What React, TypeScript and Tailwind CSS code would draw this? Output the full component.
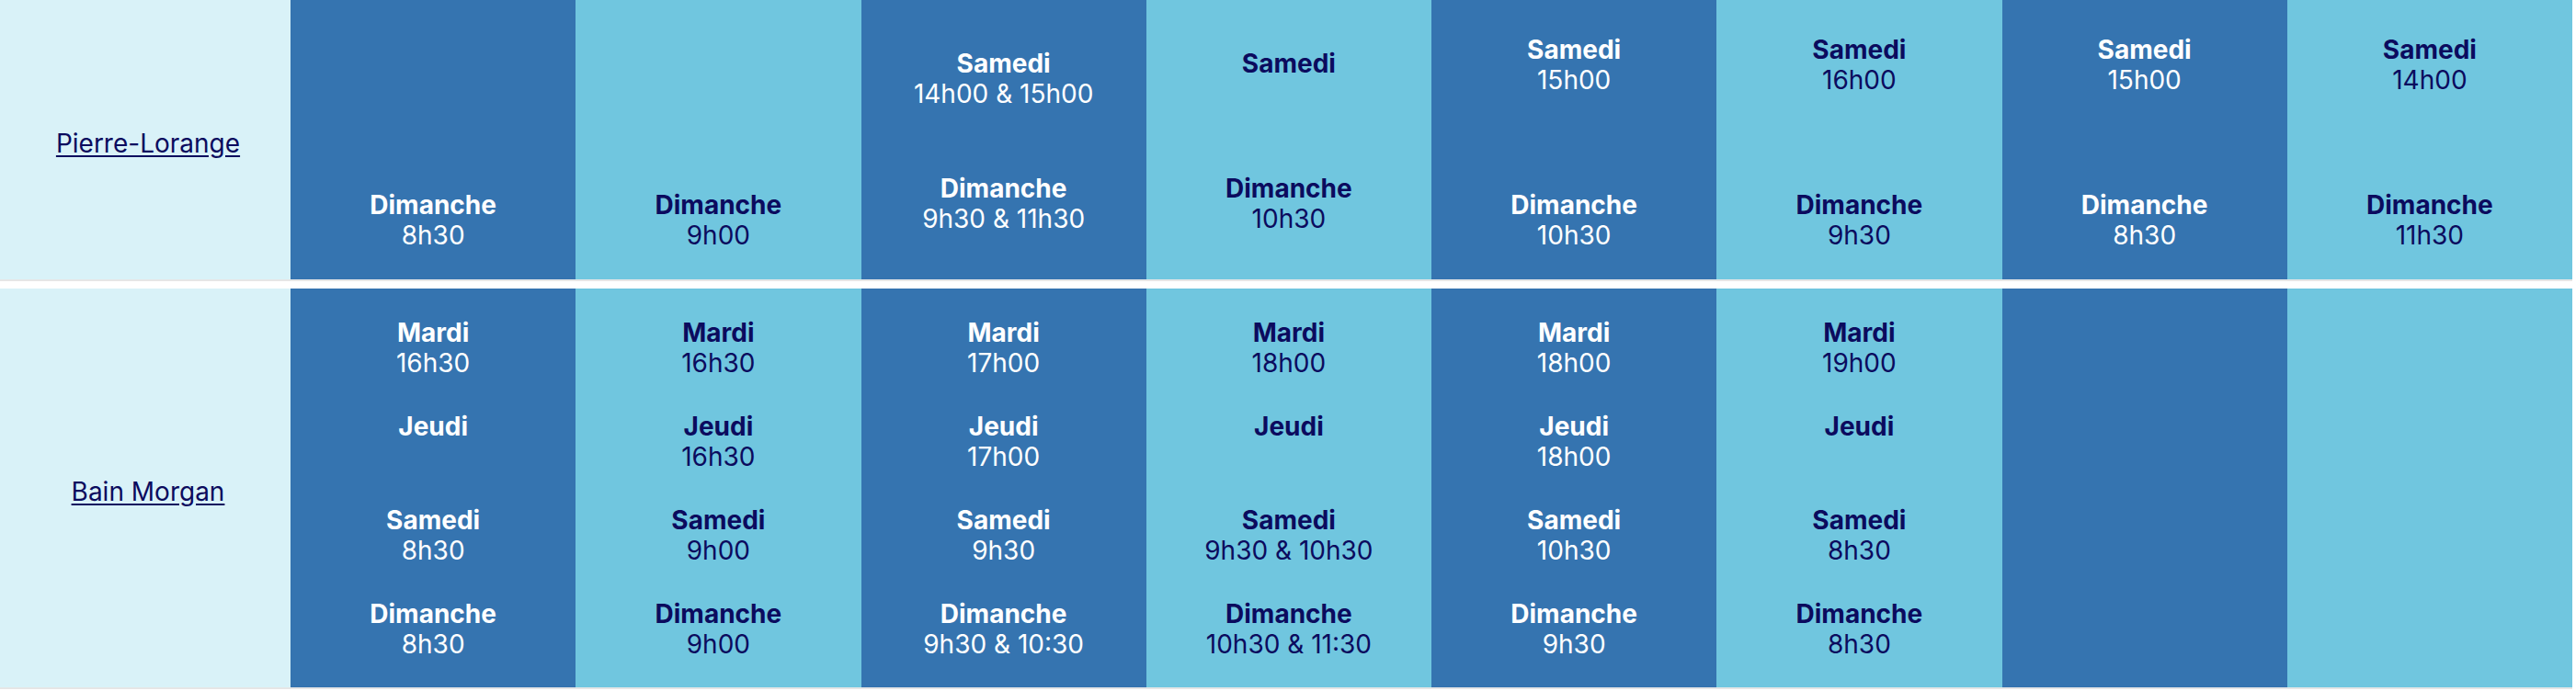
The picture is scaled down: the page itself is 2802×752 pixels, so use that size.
type Slot = { day: string; time?: string } | null;

type Cell = {
  dark: boolean;
  slots: Slot[];
  tight?: boolean;
};

const DARK = "bg-[#3574b0] text-white";
const LIGHT = "bg-[#70c6df] text-[#0b0b5e]";

const weekend: Cell[] = [
  { dark: true, slots: [null, { day: "Dimanche", time: "8h30" }] },
  { dark: false, slots: [null, { day: "Dimanche", time: "9h00" }] },
  {
    dark: true,
    tight: true,
    slots: [
      { day: "Samedi", time: "14h00 & 15h00" },
      { day: "Dimanche", time: "9h30 & 11h30" },
    ],
  },
  {
    dark: false,
    tight: true,
    slots: [{ day: "Samedi" }, { day: "Dimanche", time: "10h30" }],
  },
  {
    dark: true,
    slots: [
      { day: "Samedi", time: "15h00" },
      { day: "Dimanche", time: "10h30" },
    ],
  },
  {
    dark: false,
    slots: [
      { day: "Samedi", time: "16h00" },
      { day: "Dimanche", time: "9h30" },
    ],
  },
  {
    dark: true,
    slots: [
      { day: "Samedi", time: "15h00" },
      { day: "Dimanche", time: "8h30" },
    ],
  },
  {
    dark: false,
    slots: [
      { day: "Samedi", time: "14h00" },
      { day: "Dimanche", time: "11h30" },
    ],
  },
];

const week: Cell[] = [
  {
    dark: true,
    slots: [
      { day: "Mardi", time: "16h30" },
      { day: "Jeudi" },
      { day: "Samedi", time: "8h30" },
      { day: "Dimanche", time: "8h30" },
    ],
  },
  {
    dark: false,
    slots: [
      { day: "Mardi", time: "16h30" },
      { day: "Jeudi", time: "16h30" },
      { day: "Samedi", time: "9h00" },
      { day: "Dimanche", time: "9h00" },
    ],
  },
  {
    dark: true,
    slots: [
      { day: "Mardi", time: "17h00" },
      { day: "Jeudi", time: "17h00" },
      { day: "Samedi", time: "9h30" },
      { day: "Dimanche", time: "9h30 & 10:30" },
    ],
  },
  {
    dark: false,
    slots: [
      { day: "Mardi", time: "18h00" },
      { day: "Jeudi" },
      { day: "Samedi", time: "9h30 & 10h30" },
      { day: "Dimanche", time: "10h30 & 11:30" },
    ],
  },
  {
    dark: true,
    slots: [
      { day: "Mardi", time: "18h00" },
      { day: "Jeudi", time: "18h00" },
      { day: "Samedi", time: "10h30" },
      { day: "Dimanche", time: "9h30" },
    ],
  },
  {
    dark: false,
    slots: [
      { day: "Mardi", time: "19h00" },
      { day: "Jeudi" },
      { day: "Samedi", time: "8h30" },
      { day: "Dimanche", time: "8h30" },
    ],
  },
  { dark: true, slots: [] },
  { dark: false, slots: [] },
];

function SlotBlock({ slot }: { slot: Slot }) {
  return (
    <div className="h-[66px] text-center">
      <div className="font-bold">{slot?.day ?? "\u00a0"}</div>
      <div>{slot?.time ?? "\u00a0"}</div>
    </div>
  );
}

function Place({ name }: { name: string }) {
  return (
    <div className="w-[316px] shrink-0 bg-[#d9f2f8] flex items-center justify-center pt-[9px]">
      <a href="#" className="underline underline-offset-[3px] text-[#0b0b5e] pl-[6px]">
        {name}
      </a>
    </div>
  );
}

export default function App() {
  return (
    <div className="w-[2798px] bg-white font-['Inter',sans-serif] text-[28px] leading-[33px]">
      <div className="flex h-[306px] border-b-2 border-[#e6e6e6]">
        <Place name="Pierre-Lorange" />
        {weekend.map((c, i) => (
          <div
            key={i}
            className={`flex-1 flex flex-col ${c.dark ? DARK : LIGHT} ${
              c.tight ? "pt-[53px] gap-[70px]" : "pt-[38px] gap-[103px]"
            }`}
          >
            {c.slots.map((s, j) => (
              <SlotBlock key={j} slot={s} />
            ))}
          </div>
        ))}
      </div>

      <div className="flex h-[436px] mt-[8px] border-b-2 border-[#e6e6e6]">
        <Place name="Bain Morgan" />
        {week.map((c, i) => (
          <div
            key={i}
            className={`flex-1 flex flex-col justify-center gap-[36px] pt-[2px] ${c.dark ? DARK : LIGHT}`}
          >
            {c.slots.map((s, j) => (
              <SlotBlock key={j} slot={s} />
            ))}
          </div>
        ))}
      </div>
    </div>
  );
}
